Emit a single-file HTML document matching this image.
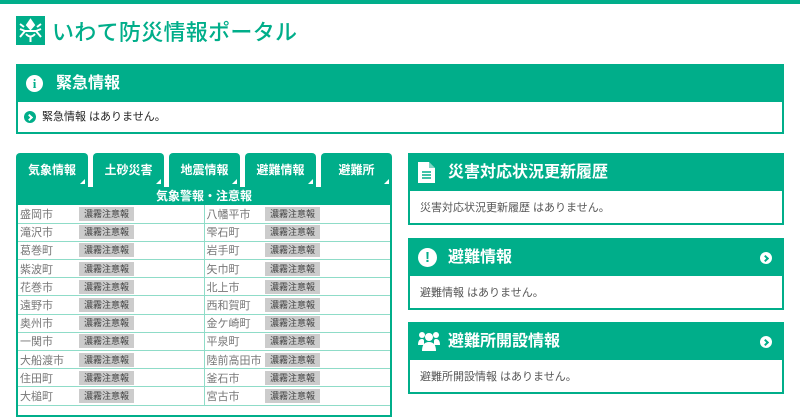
<!DOCTYPE html>
<html><head><meta charset="utf-8"><style>
*{margin:0;padding:0;box-sizing:border-box}
body{width:800px;height:400px;overflow:hidden;background:#fff;font-family:"Liberation Sans","Noto Sans CJK JP",sans-serif;position:relative}
.g{background:#00ae8a}
.abs{position:absolute}
.title{left:52px;top:15px;font-size:22px;color:#00ae8a;letter-spacing:0.3px;font-weight:500}
.box{position:absolute;border:2px solid #00ae8a;background:#fff}
.hd{background:#00ae8a;color:#fff;font-weight:bold;position:relative}
.tab{position:absolute;top:153px;height:34px;background:#00ae8a;border-radius:4px 4px 0 0;color:#fff;font-size:12px;font-weight:bold;text-align:center;line-height:34px}
.tab:after{content:"";position:absolute;right:3px;bottom:3px;border-left:5px solid transparent;border-bottom:5px solid #fff}
table{border-collapse:collapse;width:100%}
td{height:18.2px;border-bottom:1px solid #8fdcc8;font-size:11px;color:#777;padding-left:2px;vertical-align:middle;white-space:nowrap}
.bd{display:inline-block;background:#ccc;color:#444;font-size:9px;padding:0 5px;line-height:14px;height:14px}
.arrow{position:absolute;width:12px;height:12px;border-radius:50%;background:#fff}
.arrow:after{content:"";position:absolute;left:3px;top:3.5px;width:3px;height:3px;border-right:2px solid #00ae8a;border-top:2px solid #00ae8a;transform:rotate(45deg)}
.arrow.inv{background:#00ae8a}.arrow.inv:after{border-color:#fff}
.sep{border-left:1px solid #8fdcc8}
</style></head><body>
<div class="abs g" style="left:0;top:0;width:800px;height:4px"></div>
<div class="abs g" style="left:16px;top:16px;width:29px;height:29px">
<svg width="29" height="29" viewBox="0 0 29 29" fill="none" stroke="#fff" stroke-width="2">
<path d="M14.5 4 L11 9 L14.5 13 L18 9 Z" fill="#fff"/>
<path d="M4 8 L8 11 M25 8 L21 11"/>
<path d="M4 21 L9 15 L4 13 M25 21 L20 15 L25 13"/>
<path d="M8 15 H21"/><path d="M10 18 Q14.5 23 19 18"/><path d="M14.5 20 V26"/>
</svg></div>
<div class="abs title">いわて防災情報ポータル</div>

<div class="box" style="left:16px;top:64px;width:768px;height:70px">
<div class="hd" style="height:36px;font-size:16px;line-height:36px;padding-left:38px">緊急情報
<div class="abs" style="left:8px;top:9px;width:17px;height:17px;border-radius:50%;background:#fff;color:#00ae8a;font-size:13px;line-height:17px;text-align:center;font-weight:bold;font-family:'Liberation Serif',serif">i</div></div>
<div style="font-size:11px;color:#222;padding-left:24px;line-height:30px;position:relative">緊急情報 はありません。
<div class="arrow inv" style="left:6px;top:9px"></div></div>
</div>

<div class="tab" style="left:16px;width:72px">気象情報</div>
<div class="tab" style="left:93px;width:71px">土砂災害</div>
<div class="tab" style="left:169px;width:71px">地震情報</div>
<div class="tab" style="left:245px;width:71px">避難情報</div>
<div class="tab" style="left:321px;width:71px">避難所</div>
<div class="box" style="left:16px;top:187px;width:376px;height:230px;border-top:none">
<div class="hd" style="height:18px;font-size:12px;line-height:18px;text-align:center">気象警報・注意報</div>
<table>
<colgroup><col style="width:59px"><col style="width:127px"><col style="width:59px"><col></colgroup>
<tr><td>盛岡市</td><td><span class="bd">濃霧注意報</span></td><td class="sep">八幡平市</td><td><span class="bd">濃霧注意報</span></td></tr>
<tr><td>滝沢市</td><td><span class="bd">濃霧注意報</span></td><td class="sep">雫石町</td><td><span class="bd">濃霧注意報</span></td></tr>
<tr><td>葛巻町</td><td><span class="bd">濃霧注意報</span></td><td class="sep">岩手町</td><td><span class="bd">濃霧注意報</span></td></tr>
<tr><td>紫波町</td><td><span class="bd">濃霧注意報</span></td><td class="sep">矢巾町</td><td><span class="bd">濃霧注意報</span></td></tr>
<tr><td>花巻市</td><td><span class="bd">濃霧注意報</span></td><td class="sep">北上市</td><td><span class="bd">濃霧注意報</span></td></tr>
<tr><td>遠野市</td><td><span class="bd">濃霧注意報</span></td><td class="sep">西和賀町</td><td><span class="bd">濃霧注意報</span></td></tr>
<tr><td>奥州市</td><td><span class="bd">濃霧注意報</span></td><td class="sep">金ケ崎町</td><td><span class="bd">濃霧注意報</span></td></tr>
<tr><td>一関市</td><td><span class="bd">濃霧注意報</span></td><td class="sep">平泉町</td><td><span class="bd">濃霧注意報</span></td></tr>
<tr><td>大船渡市</td><td><span class="bd">濃霧注意報</span></td><td class="sep">陸前高田市</td><td><span class="bd">濃霧注意報</span></td></tr>
<tr><td>住田町</td><td><span class="bd">濃霧注意報</span></td><td class="sep">釜石市</td><td><span class="bd">濃霧注意報</span></td></tr>
<tr><td>大槌町</td><td><span class="bd">濃霧注意報</span></td><td class="sep">宮古市</td><td><span class="bd">濃霧注意報</span></td></tr>
</table></div>

<div class="box" style="left:408px;top:153px;width:376px;height:72px">
<div class="hd" style="height:36px;font-size:16px;line-height:36px;padding-left:38px">災害対応状況更新履歴
<svg class="abs" style="left:8px;top:7px" width="17" height="21" viewBox="0 0 17 21"><path d="M0 0H11L17 6V21H0Z" fill="#fff"/><path d="M11 0V6H17" fill="#00ae8a" opacity="0.5"/><path d="M4 10H13M4 13H13M4 16H13" stroke="#00ae8a" stroke-width="1.5"/></svg></div>
<div style="font-size:11px;color:#555;padding-left:10px;line-height:34px">災害対応状況更新履歴 はありません。</div>
</div>

<div class="box" style="left:408px;top:238px;width:376px;height:72px">
<div class="hd" style="height:36px;font-size:16px;line-height:36px;padding-left:38px">避難情報
<div class="abs" style="left:8px;top:8px;width:19px;height:19px;border-radius:50%;background:#fff;color:#00ae8a;font-size:15px;line-height:19px;text-align:center;font-weight:bold">!</div>
<div class="arrow" style="right:10px;top:12px"></div></div>
<div style="font-size:11px;color:#555;padding-left:10px;line-height:34px">避難情報 はありません。</div>
</div>

<div class="box" style="left:408px;top:322px;width:376px;height:72px">
<div class="hd" style="height:36px;font-size:16px;line-height:36px;padding-left:38px">避難所開設情報
<svg class="abs" style="left:8px;top:7px" width="22" height="20" viewBox="0 0 22 20" fill="#fff"><circle cx="4" cy="4" r="3"/><circle cx="18" cy="4" r="3"/><circle cx="11" cy="6" r="4"/><path d="M0 14Q0 8 4 8Q6 8 6 10V14Z"/><path d="M22 14Q22 8 18 8Q16 8 16 10V14Z"/><path d="M4 20Q4 11 11 11Q18 11 18 20Z"/></svg>
<div class="arrow" style="right:10px;top:12px"></div></div>
<div style="font-size:11px;color:#555;padding-left:10px;line-height:34px">避難所開設情報 はありません。</div>
</div>
</body></html>
